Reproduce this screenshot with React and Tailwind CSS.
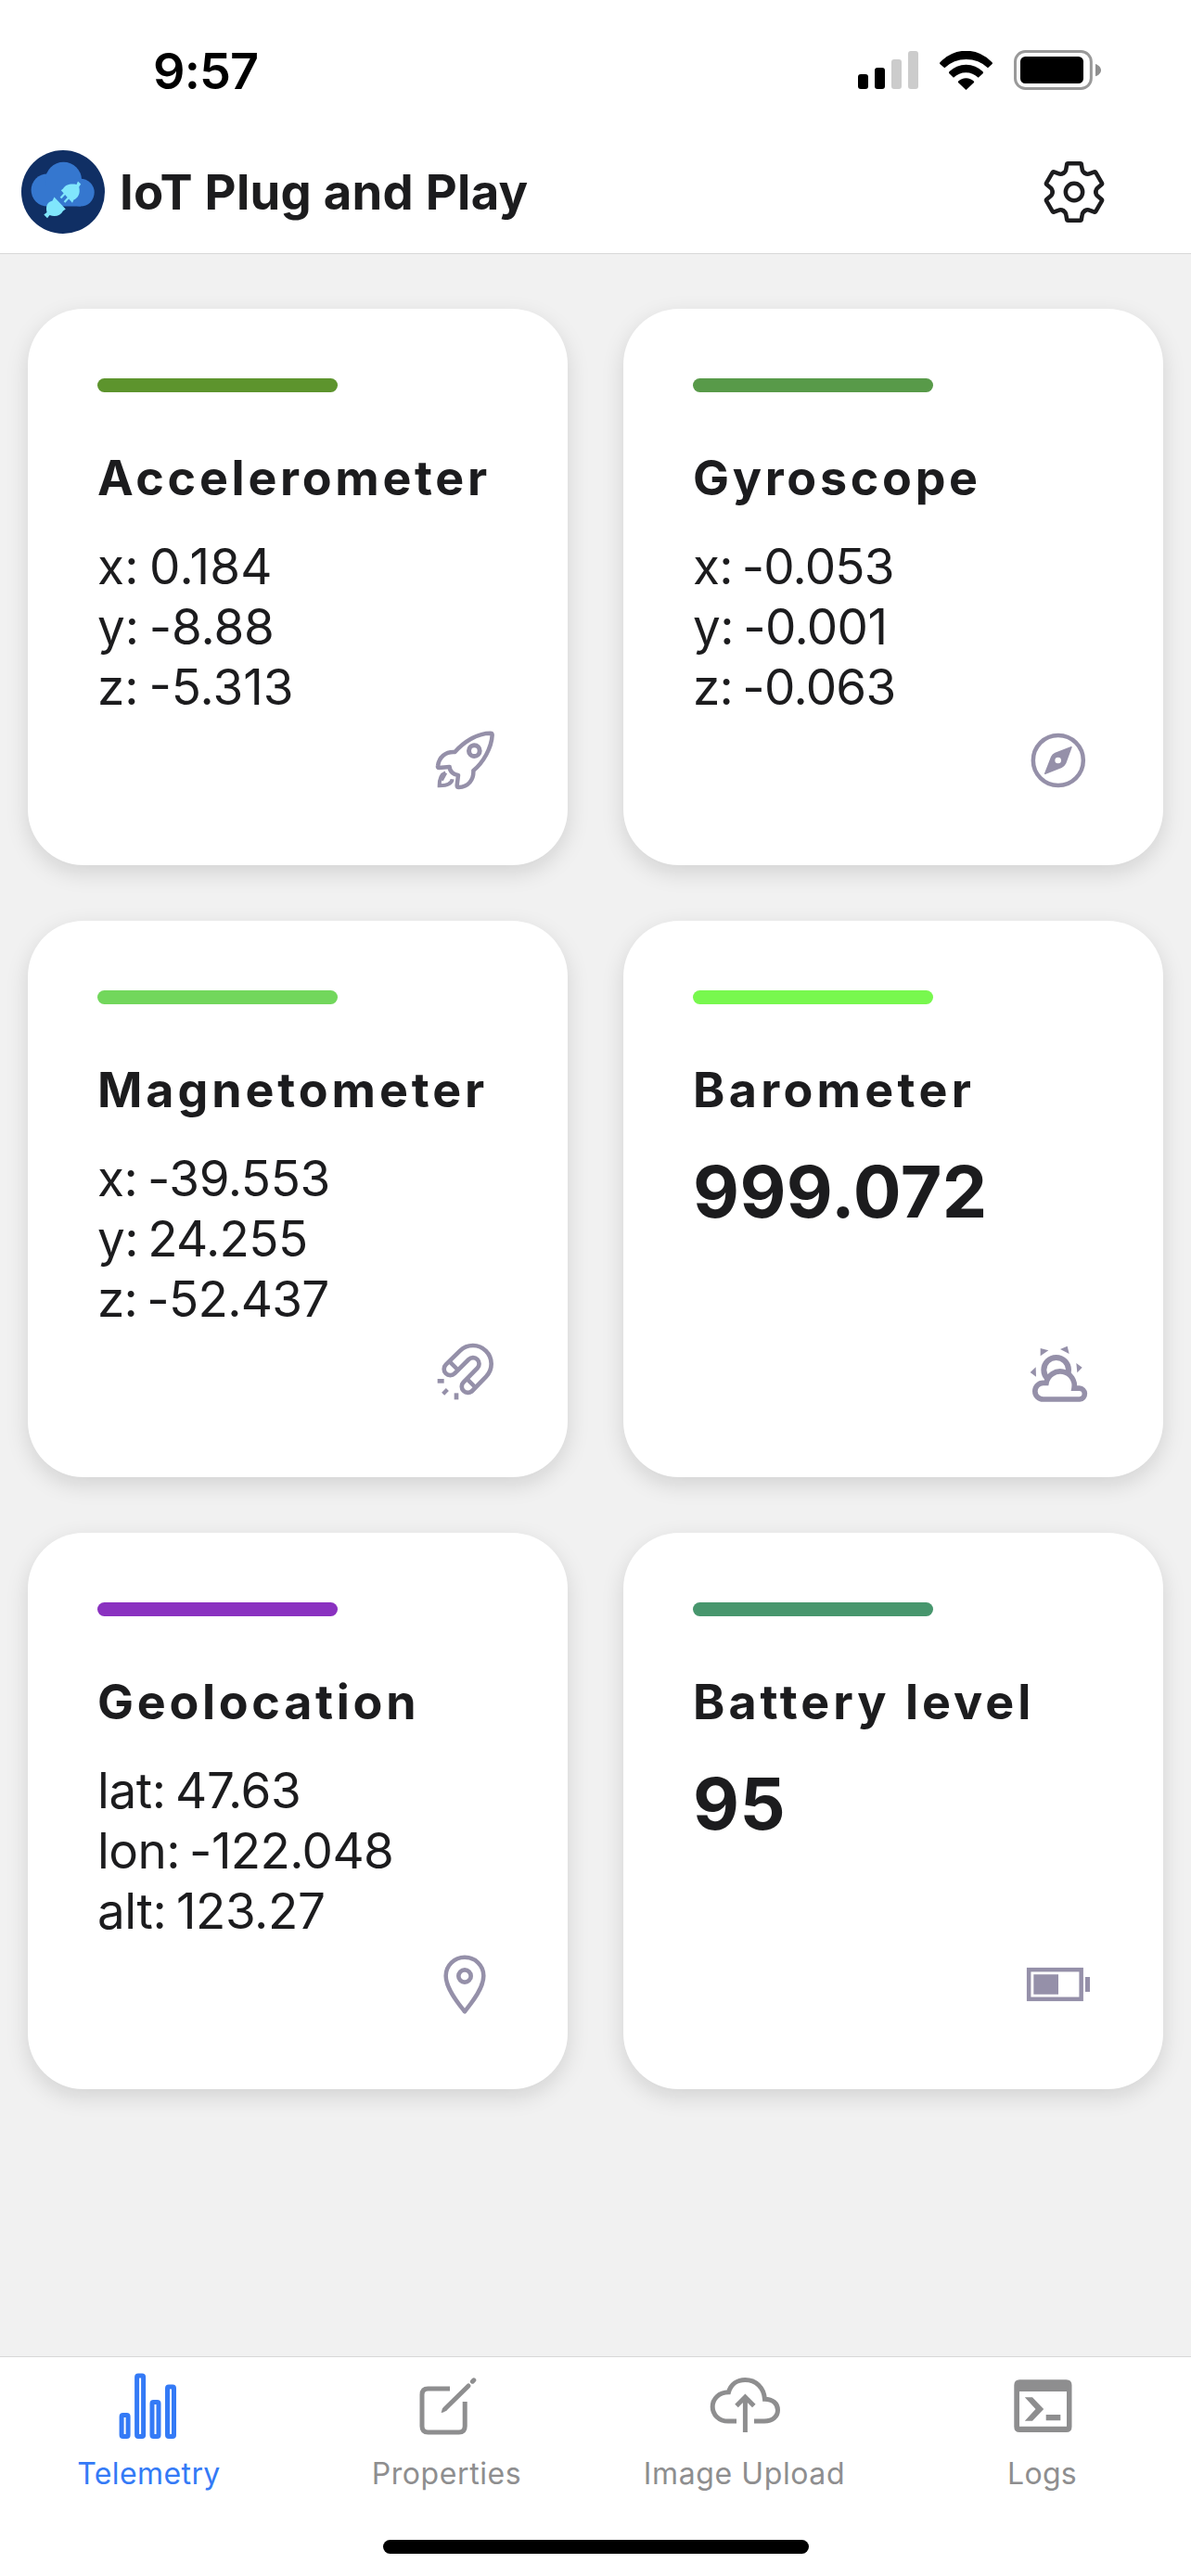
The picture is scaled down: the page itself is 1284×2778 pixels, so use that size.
const FONT = "font-['Inter','Liberation_Sans',sans-serif]";

function Signal() {
  return (
    <svg className="h-[41px] w-[65px]" viewBox="135 75 195 123">
      <rect x="135" y="150" width="33" height="48" rx="9" />
      <rect x="189" y="129" width="33" height="69" rx="9" />
      <rect x="243" y="102" width="33" height="96" rx="9" fill="#cccccc" />
      <rect x="297" y="75" width="33" height="123" rx="9" fill="#cccccc" />
    </svg>
  );
}

function Wifi() {
  return (
    <svg className="h-[42px] w-[57px]" viewBox="399 72 171 126">
      <path d="M401 108 A113 113 0 0 1 568 108 Q571 111 569 114 L555 127 A101 101 0 0 0 415 127 L400 114 Q398 111 401 108Z" />
      <path d="M430 139 A76 76 0 0 1 539 139 Q541 142 539 145 L524 158 A58 58 0 0 0 444 158 L430 145 Q428 142 430 139Z" />
      <path d="M459 170 A36 36 0 0 1 510 170 Q511 172 510 174 L487 196 Q484.500 199 482 196 L459 174 Q458 172 459 170Z" />
    </svg>
  );
}

function PhoneBattery() {
  return (
    <svg className="h-[43px] w-[94px]" viewBox="639 72 282 129">
      <rect x="643.5" y="76.500" width="245.500" height="120" rx="33" fill="none" stroke="#999999" strokeWidth="9" />
      <rect x="660" y="93" width="204" height="87" rx="16" />
      <path d="M903 117 C914 121 921 129 921 137 C921 145 914 153 903 157Z" fill="#8f8f8f" />
    </svg>
  );
}

function Logo() {
  return (
    <svg className="h-[90px] w-[90px]" viewBox="23 162 90 90">
      <circle cx="68" cy="207" r="45" fill="#102f64" />
      <g fill="#3577cf">
        <circle cx="51.200" cy="205" r="17.600" />
        <circle cx="68.500" cy="194.300" r="19.600" />
        <circle cx="86.800" cy="207.600" r="14.900" />
        <rect x="51" y="200" width="36" height="22.500" />
      </g>
      <g fill="#80e6fc">
        <path d="M65.800 205.300 L68 203.500 C70 199.500 76 197.500 82.500 199 L84 195.500 L87.200 198.500 L85.200 201.500 C87 209 84 213.500 79.500 215.500 L78 218.800Z" />
        <path d="M70.500 208 L65.500 213.500 M74.500 212.500 L69.500 218" stroke="#80e6fc" strokeWidth="2.200" />
        <path d="M58.500 212.500 L70.800 225.500 L68 227.500 C65 233 59 234 53.500 232 L51 235.200 L47.300 231.500 L50.500 229 C49 222 51 218 56.500 216.500Z" />
      </g>
    </svg>
  );
}

const TEETH = [0, 60, 120, 180, 240, 300];

function Gear() {
  return (
    <svg className="h-[66px] w-[66px]" viewBox="-99 -99 198 198" fill="none" stroke="#1c1c1e" strokeWidth="13.500" strokeLinejoin="round" strokeLinecap="round">
      {TEETH.map((angle) => (
        <path key={angle} transform={`rotate(${angle})`} d="M-35 -60.600 C-29 -64 -27 -67 -26 -74 L-23.500 -89 Q-23 -92 -20 -92 H20 Q23 -92 23.500 -89 L26 -74 C27 -67 29 -64 35 -60.600" />
      ))}
      <circle r="27.500" />
    </svg>
  );
}

function CardIcon({ viewBox, children }) {
  return (
    <svg className="h-20 w-[120px] text-[#9590a9]" viewBox={viewBox} fill="none" stroke="currentColor" strokeWidth="13.500">
      {children}
    </svg>
  );
}

const LEFT = "0 30 360 240";
const RIGHT = "-24 30 360 240";

const rocket = (
  <CardIcon viewBox={LEFT}>
    <path strokeLinejoin="round" d="M151 123 C178 92 222 62 266 62 Q272 62 272 68 C270 110 242 158 211 183 C213 213 194 236 164 237 Q158 237 158 231 L162 198 C148 197 134 186 134 171 L100 174 Q95 174 96 168 C100 140 120 121 151 123Z" />
    <path strokeLinejoin="miter" strokeWidth="12" d="M121 190 C107 195 101 208 101 232 C124 232 141 226 143 211 M121 190 L108 214" />
    <circle cx="214" cy="119" r="17.500" strokeWidth="15" />
  </CardIcon>
);

const compass = (
  <CardIcon viewBox={RIGHT}>
    <circle cx="152.500" cy="150" r="81" />
    <path fill="currentColor" stroke="none" fillRule="evenodd" d="M194 105 Q198 104 197 108 L178 160 Q173 170 164 174 L111 195 Q107 196 108 192 L129 138 Q133 129 142 125Z M162 150 A10 10 0 1 0 142 150 A10 10 0 1 0 162 150Z" />
  </CardIcon>
);

const magnet = (
  <CardIcon viewBox={LEFT}>
    <path strokeWidth="14" d="M122 125 L168 80 A59.400 59.400 0 0 1 252 164 L207 210 A19.800 19.800 0 0 1 179 182 L224 136 A19.800 19.800 0 0 0 196 108 L150.500 153.500 A20 20 0 0 1 122 125Z" />
    <path d="M131 112 L160 141 M189 170 L218 199" />
    <g fill="currentColor" stroke="none">
      <rect x="95" y="171" width="21" height="14" />
      <rect x="149" y="217" width="14" height="21" />
      <rect x="-10" y="-6.500" width="20" height="13" transform="translate(120 212.500) rotate(-45)" />
    </g>
  </CardIcon>
);

const weather = (
  <CardIcon viewBox={RIGHT}>
    <circle cx="146" cy="142" r="40" strokeWidth="18" />
    <path fill="white" strokeWidth="17" d="M114 184 A45 45 0 0 1 204 201.500 H221 A17.800 17.800 0 0 1 222 237 H104 A26.500 26.500 0 0 1 104 184Z" />
    <path fill="currentColor" stroke="none" d="M95 72 L121 79 L95 97Z M159 75 L182 65 L188 90Z M211 120 L230 134 L214 151Z M80 133 L62 150 L81 164Z" />
  </CardIcon>
);

const pin = (
  <CardIcon viewBox={LEFT}>
    <path strokeLinejoin="round" d="M183 238 C166 216 122 165 122 122 A61 60 0 0 1 244 122 C244 165 200 216 183 238Z" />
    <circle cx="183" cy="123" r="20" strokeWidth="14" />
  </CardIcon>
);

const battery = (
  <CardIcon viewBox={RIGHT}>
    <rect x="57.500" y="102.500" width="169.500" height="95" />
    <path fill="currentColor" stroke="none" d="M73 118 H153 V182 H73Z M240 126 H255 V174 H240Z" />
  </CardIcon>
);

const CARDS = [
  {
    title: "Accelerometer",
    track: "tracking-[3.7px]",
    bar: "bg-[#5d942d]",
    lines: [["x: 0.184", "tracking-[0.3px]"], ["y: -8.88", "tracking-[-0.1px]"], ["z: -5.313", "tracking-[0px]"]],
    icon: rocket,
  },
  {
    title: "Gyroscope",
    track: "tracking-[3.7px]",
    bar: "bg-[#589a49]",
    lines: [["x: -0.053", "tracking-[-0.8px]"], ["y: -0.001", "tracking-[-0.6px]"], ["z: -0.063", "tracking-[-0.7px]"]],
    icon: compass,
  },
  {
    title: "Magnetometer",
    track: "tracking-[3.9px]",
    bar: "bg-[#72d75c]",
    lines: [["x: -39.553", "tracking-[-0.4px]"], ["y: 24.255", "tracking-[-0.6px]"], ["z: -52.437", "tracking-[-0.7px]"]],
    icon: magnet,
  },
  { title: "Barometer", track: "tracking-[4.3px]", bar: "bg-[#78f84e]", value: "999.072", icon: weather },
  {
    title: "Geolocation",
    track: "tracking-[3.7px]",
    bar: "bg-[#8a31c0]",
    lines: [["lat: 47.63", "tracking-[-0.4px]"], ["lon: -122.048", "tracking-[-0.6px]"], ["alt: 123.27", "tracking-[-0.4px]"]],
    icon: pin,
  },
  { title: "Battery level", track: "tracking-[4px]", bar: "bg-[#47966d]", value: "95", icon: battery },
];

function Card({ title, track, bar, lines, value, icon }) {
  return (
    <section className="flex h-[600px] flex-col rounded-[60px] bg-white pt-[75px] pb-[73px] pl-[75px] shadow-[0_8px_24px_rgba(0,0,0,0.13)]">
      <div className={`h-[15px] w-[259px] shrink-0 rounded-full ${bar}`} />
      <h2 className={`mt-[61px] text-[52px] leading-[64px] font-bold whitespace-nowrap ${track}`}>{title}</h2>
      {lines ? (
        <div className="mt-[31px] text-[53px] leading-[65px] [word-spacing:-4px] whitespace-nowrap">
          {lines.map(([line, spacing]) => (
            <p key={line} className={spacing}>{line}</p>
          ))}
        </div>
      ) : (
        <p className="mt-[30px] text-[77px] leading-[94px] font-bold tracking-[0.4px]">{value}</p>
      )}
      <div className="mt-auto mr-[52px] flex justify-end">{icon}</div>
    </section>
  );
}

const TABS = [
  {
    label: "Telemetry",
    color: "text-[#347af6]",
    track: "tracking-[0.4px]",
    viewBox: "120 2552 81 84",
    icon: (
      <>
        <rect x="131.100" y="2604.500" width="7" height="23" rx="1.500" />
        <rect x="147.600" y="2562" width="7" height="65.500" rx="1.500" />
        <rect x="164" y="2590.500" width="7" height="37" rx="1.500" />
        <rect x="180.500" y="2574" width="7" height="53.500" rx="1.500" />
      </>
    ),
  },
  {
    label: "Properties",
    color: "text-[#8e8e8f]",
    track: "tracking-[0.6px]",
    viewBox: "441 2552 81 84",
    icon: (
      <>
        <path d="M485 2576 H461.500 Q455 2576 455 2582.500 V2616.500 Q455 2623 461.500 2623 H494.700 Q501.200 2623 501.200 2616.500 V2590" />
        <path strokeLinecap="round" d="M480 2597.500 L505 2573" />
        <path strokeLinecap="round" d="M509.400 2568.200 L510.800 2566.800" />
        <path fill="currentColor" stroke="none" d="M475.600 2602 L477.200 2596.500 L481.800 2599.200 L478 2601.500Z" />
      </>
    ),
  },
  {
    label: "Image Upload",
    color: "text-[#8e8e8f]",
    track: "tracking-[0.6px]",
    viewBox: "762 2552 81 84",
    icon: (
      <>
        <path d="M794 2611 H785 C775 2611 768.200 2604 768.200 2595.500 C768.200 2587 775 2580 785.500 2579.800 C788 2571 795 2566.500 803.400 2566.500 C815 2566.500 823.500 2575 824.500 2587.200 C833 2587.200 838.500 2592 838.500 2599 C838.500 2606 833 2611 824 2611 H813" />
        <path d="M803.400 2585 V2623 M794 2594.500 L803.400 2585 L812.800 2594.500" />
      </>
    ),
  },
  {
    label: "Logs",
    color: "text-[#8e8e8f]",
    track: "tracking-[0.3px]",
    viewBox: "1083 2552 81 84",
    icon: (
      <path
        fill="currentColor"
        stroke="none"
        fillRule="evenodd"
        d="M1099.300 2566.300 H1149.500 Q1155.500 2566.300 1155.500 2572.300 V2617 Q1155.500 2623 1149.500 2623 H1099.300 Q1093.300 2623 1093.300 2617 V2572.300 Q1093.300 2566.300 1099.300 2566.300Z M1099 2579 V2616.700 H1150 V2579Z M1104.800 2585.300 H1113 L1125.200 2598 L1113 2610.700 H1104.800 L1116.500 2598Z M1127.700 2604 H1143.300 V2610.300 H1127.700Z"
      />
    ),
  },
];

export default function App() {
  return (
    <div className={`flex h-[2778px] w-[1284px] flex-col overflow-hidden bg-[#f1f1f1] text-[#1c1c1e] ${FONT}`}>
      <div className="flex h-[141px] shrink-0 items-start justify-between bg-white pt-11 pr-[97px] pl-[165px]">
        <span className="mt-px text-[54px] leading-[64px] font-semibold tracking-[-0.9px] text-black">9:57</span>
        <div className="flex h-[63px] items-center">
          <Signal />
          <div className="ml-[23px]">
            <Wifi />
          </div>
          <div className="ml-[23px]">
            <PhoneBattery />
          </div>
        </div>
      </div>

      <header className="flex h-[133px] shrink-0 items-center border-b border-[#d8d8d8] bg-white pr-[93px] pl-[23px]">
        <Logo />
        <h1 className="ml-4 text-[52.6px] leading-[64px] font-bold tracking-[0.28px]">IoT Plug and Play</h1>
        <button className="ml-auto" aria-label="Settings">
          <Gear />
        </button>
      </header>

      <main className="grid grow grid-cols-2 content-start gap-[60px] px-[30px] pt-[59px]">
        {CARDS.map((card) => (
          <Card key={card.title} {...card} />
        ))}
      </main>

      <footer className="flex h-[237px] shrink-0 flex-col items-center border-t border-[#d8d8d8] bg-white">
        <nav className="grid w-full grid-cols-4 pt-2.5">
          {TABS.map((tab) => (
            <a key={tab.label} className={`flex flex-col items-center ${tab.color}`}>
              <svg className="h-[84px] w-[81px]" viewBox={tab.viewBox} fill="none" stroke="currentColor" strokeWidth="5">
                {tab.icon}
              </svg>
              <span className={`mt-3 text-[32px] leading-[40px] ${tab.track}`}>{tab.label}</span>
            </a>
          ))}
        </nav>
        <div className="mt-[51px] h-[15px] w-[459px] rounded-full bg-black" />
      </footer>
    </div>
  );
}
